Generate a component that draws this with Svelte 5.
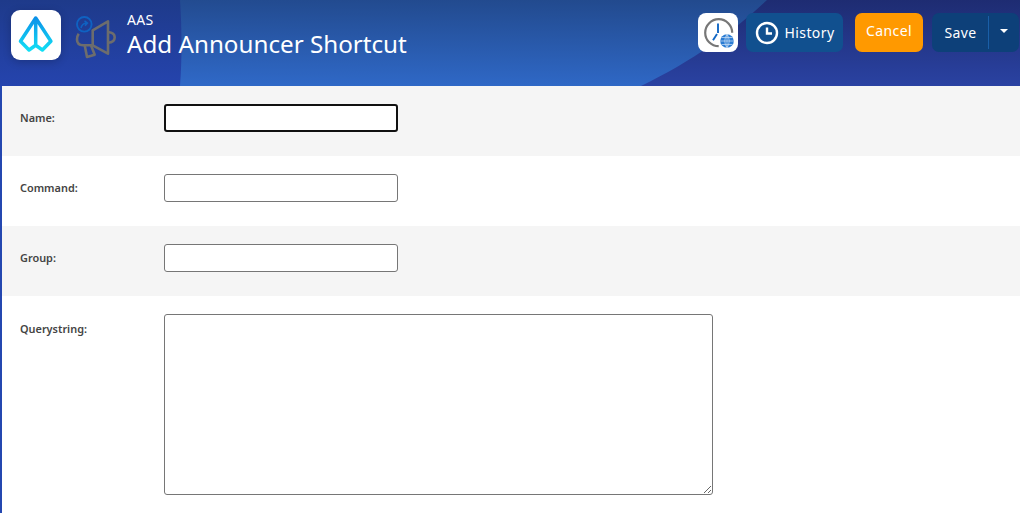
<script>
  const fields = [
    { label: 'Name:', focused: true },
    { label: 'Command:' },
    { label: 'Group:' }
  ];
</script>

<div class="page">
  <header class="topbar">
    <svg class="topbar-bg" viewBox="0 0 1020 86" preserveAspectRatio="none" aria-hidden="true">
      <defs>
        <linearGradient id="mid" x1="0.600" y1="0" x2="0.500" y2="1">
          <stop offset="0" stop-color="#224a8e" />
          <stop offset="1" stop-color="#2f68c6" />
        </linearGradient>
        <linearGradient id="side" x1="0" y1="0" x2="0" y2="1">
          <stop offset="0" stop-color="#1e3a8a" />
          <stop offset="1" stop-color="#2544ae" />
        </linearGradient>
        <linearGradient id="right" x1="0" y1="0" x2="0" y2="1">
          <stop offset="0" stop-color="#1e2c72" />
          <stop offset="1" stop-color="#2a42a2" />
        </linearGradient>
      </defs>
      <rect width="1020" height="86" fill="url(#mid)" />
      <path d="M0 0H180C182 30 182 60 180 86H0Z" fill="url(#side)" />
      <path d="M767 0C735 30 695 60 641 86H1020V0Z" fill="url(#right)" />
    </svg>

    <div class="app-logo">
      <svg viewBox="0 0 50 50" width="50" height="50" aria-hidden="true">
        <defs>
          <linearGradient id="kite" gradientUnits="userSpaceOnUse" x1="25" y1="7" x2="25" y2="41">
            <stop offset="0" stop-color="#0b8fe8" />
            <stop offset="1" stop-color="#12e0f5" />
          </linearGradient>
        </defs>
        <path d="M24.700 8L9.500 31.300L18 40L24.700 35.300L31.400 40L39.900 31.300Z M24.700 8V35.300" fill="none" stroke="url(#kite)" stroke-width="3.500" stroke-linejoin="round" />
      </svg>
    </div>

    <svg class="page-icon" viewBox="0 0 50 50" width="50" height="50" aria-hidden="true">
      <g fill="none" stroke="#6d6d6d" stroke-width="2.600" stroke-linejoin="round">
        <path d="M17.700 15.300L33 6.300V38.700L17.700 30.300Z" />
        <path d="M17.700 30.300H8Q2 30 2 24.500Q2 21 3.700 18.700" />
        <path d="M33 17Q39.700 17.500 39.700 22.300Q39.700 27.500 33 27.700" />
        <path d="M9.700 30.300L12 42L19.700 39.700L16 30.300" />
      </g>
      <circle cx="9.300" cy="9.300" r="7.300" fill="none" stroke="#0f62c2" stroke-width="1.900" />
      <path d="M6 13Q7 8.500 11.500 8M9.500 5.800L12.500 8L10 10.800" fill="none" stroke="#0f62c2" stroke-width="1.500" />
    </svg>

    <div class="titles">
      <div class="module">AAS</div>
      <h1>Add Announcer Shortcut</h1>
    </div>

    <div class="actions">
      <button class="tz-btn" aria-label="Timezone">
        <svg viewBox="0 0 40 39" width="40" height="39" aria-hidden="true">
          <path d="M34.200 19.700A13.500 13.500 0 1 0 20.700 33.200" fill="none" stroke="#777" stroke-width="2.200" />
          <path d="M20 10.500V20" stroke="#1167c4" stroke-width="1.900" />
          <path d="M19 21L15 27.300" stroke="#1167c4" stroke-width="1.900" />
          <circle cx="29" cy="28" r="6.800" fill="#2b7cd3" />
          <path d="M22.200 28H35.800M29 21.200V34.800M23.500 24.500H34.500M23.500 31.500H34.500M29 21.200Q24.500 28 29 34.800M29 21.200Q33.500 28 29 34.800" fill="none" stroke="#cfe3f7" stroke-width=".7" />
        </svg>
      </button>
      <button class="history-btn">
        <svg viewBox="0 0 24 24" width="24" height="24" aria-hidden="true">
          <circle cx="12" cy="12" r="10" fill="none" stroke="#fff" stroke-width="2.400" />
          <path d="M12 6.500V12.500H17" fill="none" stroke="#fff" stroke-width="2.400" />
        </svg>
        History
      </button>
      <button class="cancel-btn">Cancel</button>
      <div class="save-group">
        <button class="save-btn">Save</button>
        <button class="caret-btn" aria-label="More save options"><span class="caret"></span></button>
      </div>
    </div>
  </header>

  <main class="form">
    {#each fields as field}
      <div class="row">
        <label class="field-label" for={field.label}>{field.label}</label>
        <input id={field.label} class="text-input" class:focused={field.focused} type="text" />
      </div>
    {/each}
    <div class="row row-tall">
      <label class="field-label" for="querystring">Querystring:</label>
      <textarea id="querystring" class="text-area"></textarea>
    </div>
  </main>
</div>

<style>
  :global(body) {
    margin: 0;
    background: #2447b0;
    overflow: hidden;
  }

  .page {
    height: 513px;
    font-family: "Noto Sans", "Open Sans", sans-serif;
    overflow: hidden;
  }

  .topbar {
    position: relative;
    height: 86px;
    display: flex;
    align-items: flex-start;
    box-sizing: border-box;
    padding: 10px 1px 0 11px;
  }

  .topbar-bg {
    position: absolute;
    inset: 0;
    width: 100%;
    height: 100%;
  }

  .app-logo,
  .page-icon,
  .titles,
  .actions {
    position: relative;
  }

  .app-logo {
    width: 50px;
    height: 50px;
    background: #fff;
    border-radius: 9px;
    box-shadow: 0 2px 8px rgba(0, 0, 0, .2);
  }

  .app-logo svg,
  .page-icon,
  .tz-btn svg {
    display: block;
  }

  .page-icon {
    margin: 5px 0 0 14px;
  }

  .titles {
    margin-left: 2px;
    color: #fff;
  }

  .module {
    font-size: 14px;
    line-height: 20px;
    letter-spacing: .3px;
  }

  h1 {
    margin: -1px 0 0;
    font-size: 24.2px;
    font-weight: 400;
    line-height: 30px;
    white-space: nowrap;
  }

  .actions {
    margin-left: auto;
    display: flex;
    align-items: flex-start;
    padding-top: 3px;
  }

  button {
    border: 0;
    padding: 0;
    color: #fff;
    font-family: inherit;
    font-size: 14px;
    letter-spacing: .4px;
  }

  .tz-btn {
    width: 40px;
    height: 39px;
    background: #fff;
    border-radius: 8px;
  }

  .history-btn {
    width: 97px;
    height: 39px;
    margin-left: 8px;
    display: flex;
    align-items: center;
    justify-content: center;
    gap: 6px;
    background: #11508f;
    border-radius: 7px;
  }

  .cancel-btn {
    width: 68px;
    height: 39px;
    margin-left: 12px;
    padding-bottom: 5px;
    background: #ff9900;
    border-radius: 7px;
  }

  .save-group {
    width: 87px;
    height: 39px;
    margin-left: 9px;
    display: flex;
    background: #0d4079;
    border-radius: 7px;
  }

  .save-btn {
    width: 57px;
    padding-left: 1px;
    background: none;
    border-right: 1px solid #1a5fa8;
    margin: 3px 0;
  }

  .caret-btn {
    flex: 1;
    background: none;
    display: flex;
    justify-content: center;
    padding-top: 16px;
  }

  .caret {
    width: 0;
    height: 0;
    border: 4px solid transparent;
    border-top-color: #fff;
    border-bottom: 0;
  }

  .form {
    margin-left: 2px;
    height: 427px;
    background: #fff;
  }

  .row {
    height: 70px;
    box-sizing: border-box;
    display: flex;
    align-items: flex-start;
    padding: 18px 0 0 18px;
  }

  .row:nth-child(odd) {
    background: #f5f5f5;
  }

  .row-tall {
    height: auto;
  }

  .field-label {
    width: 144px;
    font-size: 10.900px;
    font-weight: 600;
    line-height: 28px;
    color: #444;
  }

  .row-tall .field-label {
    line-height: 30px;
  }

  .text-input {
    width: 234px;
    height: 28px;
    box-sizing: border-box;
    background: #fff;
    border: 1px solid #767676;
    border-radius: 3px;
    outline: 0;
  }

  .text-input.focused {
    border: 2px solid #111;
  }

  .text-area {
    display: block;
    width: 549px;
    height: 181px;
    box-sizing: border-box;
    background: #fff;
    border: 1px solid #767676;
    border-radius: 3px;
    outline: 0;
  }
</style>
